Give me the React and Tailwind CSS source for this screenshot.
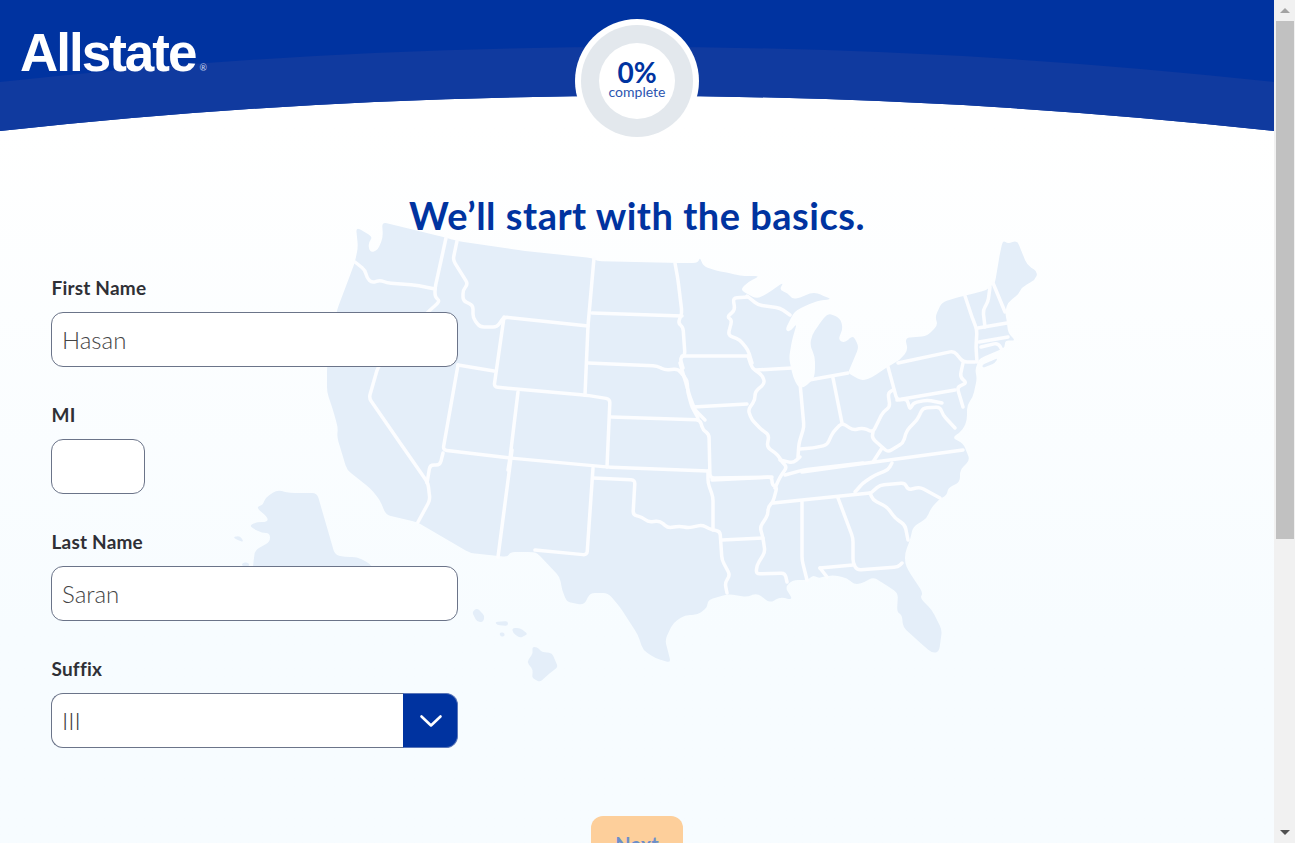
import React from 'react';

// silhouette of the lower 48, clockwise from the Olympic peninsula
const US_OUTLINE = `356,227 373,237 368,243 370,253 378,250 383,237 382,222 447,238 457,241 525,251 592,258 597,261 673,263 698,263 700,257 703,266 717,271 730,273 740,276 760,276 748,282 740,290 757,299 768,293 784,282 779,290 788,293 792,299 800,298 810,293 818,293 823,296 832,299 817,301 805,306 797,310 793,314 790,320 785,330 790,332 797,323 792,340 789,358 793,377 798,387 803,388 813,380 815,373 815,357 810,345 812,335 820,323 828,313 840,318 843,328 838,340 845,343 853,335 859,347 850,368 848,373 862,381 873,377 887,367 900,360 908,350 905,338 927,336 938,325 935,317 942,302 963,296 968,295 987,290 992,285 995,283 1000,253 1003,240 1008,244 1017,240 1027,265 1038,272 1035,280 1022,287 1018,295 1008,302 1005,312 1007,322 1008,333 1016,341 1005,340 1005,347 1000,350 980,358 978,362 975,370 977,378 973,397 967,405 967,420 963,430 952,438 963,443 970,460 960,470 960,482 948,488 947,495 938,500 930,510 927,518 913,527 910,540 905,553 905,563 908,570 923,593 920,598 932,610 942,630 939,652 932,653 917,640 903,627 902,615 897,612 898,593 883,583 873,577 865,582 855,585 847,578 833,575 823,577 818,578 813,575 808,580 793,580 785,587 793,600 780,597 770,603 757,593 747,597 728,594 708,600 707,608 697,615 685,615 673,623 665,640 671,663 655,658 643,650 638,635 620,607 608,593 590,593 584,605 567,602 562,590 560,577 537,553 533,552 510,552 508,557 470,553 422,525 417,522 386,515 380,500 370,488 347,470 337,437 338,428 333,410 327,392 327,367 337,310 352,270 355,262 358,247`;

const ALASKA = `317,493 335,555 345,557 357,557 367,562 372,566 372,570 253,570 253,566 255,550 270,542 270,533 262,533 252,528 250,525 257,522 267,522 268,518 256,507 263,505 265,498 277,490 290,493`;

const ISLANDS = [
  '233,537 240,536 244,542 237,540',
  '242,563 248,562 250,566 242,566',
  '472,612 477,608 485,616 483,622 477,622',
  '495,622 508,621 508,626 497,625',
  '499,633 504,632 505,636 501,637',
  '512,628 520,628 528,634 520,638 513,633',
  '532,647 537,647 542,652 552,653 558,667 550,673 540,682 532,678 533,670 527,662 533,653',
  '982,365 998,358 995,363 983,368',
];

const STATE_LINES = [
  '355,262 365,270 367,278 372,283 380,280 387,283 415,285 435,289',
  '446,238 435,288 435,297 440,301 427,313 378,367 369,398 405,450 428,483 430,500 418,522',
  '457,241 453,260 468,284 463,290 463,301 473,305 473,318 480,327 497,327 504,317 588,326',
  '504,317 494,387 585,395 610,399 607,467',
  '594,258 588,326 585,395',
  '592,313 682,316',
  '588,363 657,366 665,370 678,369 687,380 688,393 692,407 698,418',
  '675,263 678,280 682,313 678,323 683,327 685,355 680,358 683,368',
  '682,356 748,356',
  '518,392 510,458 508,470',
  '458,365 443,450 510,458 607,467 708,471',
  '458,365 494,371',
  '443,453 440,465 430,465 427,483',
  '512,450 498,557',
  '593,468 587,555 535,550',
  '593,478 635,480 633,515 642,517 648,522 660,521 668,528 680,526 688,528 702,525 712,530 720,531 722,560 730,575 725,583 727,593',
  '708,471 708,483 713,497 713,530',
  '712,480 772,477 772,485 777,487 773,502 768,507 768,515 760,527 763,538 765,552 757,565 756,574 785,573 787,582',
  '722,540 763,538',
  '802,502 802,560 807,580',
  '773,503 870,493',
  '838,498 853,538 853,563 857,570 898,567 902,563',
  '820,568 853,565',
  '820,568 827,577',
  '870,493 873,500 887,507 895,518 905,525 908,540',
  '872,492 880,485 905,483 908,490 920,487 940,498',
  '855,492 863,483 875,475 888,470 892,463',
  '802,472 867,463 963,450',
  '693,407 747,404',
  '611,417 700,420 703,430 709,434 710,478 772,477',
  '680,363 685,380 690,397 695,410 705,420',
  '748,356 752,368 762,375 765,383 755,392 755,400 748,410 752,420 762,430 769,435 767,447 778,455 782,462 787,467 780,477 775,488',
  '748,297 733,298 735,310 727,317 732,320 728,335 740,340 748,350 752,363',
  '747,296 758,305 780,308 790,315',
  '756,370 792,368',
  '800,383 804,427 799,443 798,457',
  '809,380 848,373',
  '833,378 842,423',
  '800,449 813,448 827,445 833,432 842,423 853,430 863,428 873,432 883,412 890,407 888,393 893,390',
  '780,460 793,463 800,457',
  '873,432 872,438 883,448 888,452 903,443 907,430 917,420 923,408 940,407 943,415 955,428',
  '882,448 873,462',
  '785,475 803,470 863,463',
  '888,367 897,400 955,390',
  '898,363 954,351 963,362 975,362',
  '963,363 960,377 967,383 957,387 963,407',
  '897,400 907,399 910,410 913,403 927,400 942,403',
  '965,296 972,317 977,330 976,347 977,362',
  '990,287 988,302 983,310 985,327',
  '993,283 1005,312',
  '978,328 1007,323',
  '979,342 1008,337',
  '981,347 998,343 1002,350',
];

// turns "x,y x,y" into a path whose corners are rounded off, so the coast and rivers don't look jagged
function roundedPath(str, closed, r = 5) {
  const pts = str.trim().split(/\s+/).map((p) => p.split(',').map(Number));
  const n = pts.length;
  const toward = (a, b, d) => {
    const len = Math.hypot(b[0] - a[0], b[1] - a[1]) || 1;
    const t = Math.min(d, len / 2) / len;
    return [a[0] + (b[0] - a[0]) * t, a[1] + (b[1] - a[1]) * t];
  };
  let d = '';
  for (let i = 0; i < n; i++) {
    const cur = pts[i];
    if (!closed && (i === 0 || i === n - 1)) {
      d += `${i === 0 ? 'M' : 'L'}${cur[0]} ${cur[1]}`;
      continue;
    }
    const prev = pts[(i - 1 + n) % n];
    const next = pts[(i + 1) % n];
    const a = toward(cur, prev, r);
    const b = toward(cur, next, r);
    d += `${i === 0 ? 'M' : 'L'}${a[0]} ${a[1]}Q${cur[0]} ${cur[1]} ${b[0]} ${b[1]}`;
  }
  return closed ? d + 'Z' : d;
}

function UsMap() {
  return (
    <svg className="absolute left-0 top-0" width="1274" height="843" viewBox="0 0 1274 843" aria-hidden="true">
      <g fill="#e4eef9">
        <path d={roundedPath(US_OUTLINE, true)} />
        <path d={roundedPath(ALASKA, true)} />
        {ISLANDS.map((pts) => (
          <path key={pts} d={roundedPath(pts, true, 3)} />
        ))}
      </g>
      <g fill="none" stroke="#fcfdff" strokeWidth="3.5" strokeLinejoin="round" strokeLinecap="round">
        {STATE_LINES.map((pts) => (
          <path key={pts} d={roundedPath(pts, false, 4)} />
        ))}
      </g>
    </svg>
  );
}

function HeaderWaves() {
  return (
    <svg className="absolute left-0 top-0" width="1274" height="132" viewBox="0 0 1274 132" aria-hidden="true">
      <path d="M0 0H1274V131Q637 61 0 131Z" fill="#0033a0" />
      <path d="M0 82Q637 12 1274 82V131Q637 61 0 131Z" fill="#103a9f" />
    </svg>
  );
}

function Progress() {
  return (
    <div className="absolute left-[575px] top-[19px] flex h-[124px] w-[124px] items-center justify-center rounded-full bg-white">
      <div className="flex h-[112px] w-[112px] items-center justify-center rounded-full bg-[#e3e8ed]">
        <div className="flex h-[76px] w-[76px] flex-col items-center justify-center rounded-full bg-white pb-[5px] text-[#0033a0]">
          <span className="text-[28px] font-bold leading-[26px]">0%</span>
          <span className="text-[14px] leading-[14px] text-[#2c55b0]">complete</span>
        </div>
      </div>
    </div>
  );
}

function Field({ label, value, width = 'w-[407px]' }) {
  return (
    <div className="mb-9">
      <label className="mb-3 block h-6 pl-[0.5px] text-[19px] font-bold leading-6 tracking-[0.2px] text-[#2f3036]">{label}</label>
      <input
        readOnly
        value={value}
        className={`${width} block h-[55px] rounded-xl border border-[#6b7489] bg-white px-[10px] text-[24px] font-light text-[#444444] outline-none`}
      />
    </div>
  );
}

function ScrollBar() {
  return (
    <div className="flex h-[843px] w-[21px] flex-col bg-[#f1f1f1]">
      <div className="flex h-[21px] w-full items-center justify-center">
        <div className="h-0 w-0 border-x-[5px] border-b-[5px] border-x-transparent border-b-[#a3a3a3]" />
      </div>
      <div className="ml-[2px] h-[518px] w-[18px] bg-[#c1c1c1]" />
      <div className="flex-1" />
      <div className="flex h-[21px] w-full items-center justify-center">
        <div className="h-0 w-0 border-x-[5px] border-t-[5px] border-x-transparent border-t-[#505050]" />
      </div>
    </div>
  );
}

export default function App() {
  return (
    <div className="flex h-[843px] overflow-hidden font-[Lato,sans-serif]">
      <main className="relative h-[843px] w-[1274px] overflow-hidden bg-gradient-to-b from-white from-[15%] to-[#f7fcff] to-[75%]">
        <UsMap />
        <header className="relative h-[132px]">
          <HeaderWaves />
          <div className="absolute left-[20px] top-[23px] flex items-start text-white">
            <span className="font-['Liberation_Sans',sans-serif] text-[53px] font-bold leading-[60px] tracking-[-2px]">Allstate</span>
            <span className="ml-[4px] mt-[40px] text-[9px] leading-[10px] text-[#c9d4ee]">®</span>
          </div>
          <Progress />
        </header>

        <h1 className="relative mt-[61px] text-center text-[38px] font-bold leading-[44px] tracking-[0.5px] text-[#0033a0]">
          We’ll start with the basics.
        </h1>

        <form className="relative mt-[39px] pl-[51px]">
          <Field label="First Name" value="Hasan" />
          <Field label="MI" value="" width="w-[94px]" />
          <Field label="Last Name" value="Saran" />
          <div>
            <label className="mb-3 block h-6 pl-[0.5px] text-[19px] font-bold leading-6 tracking-[0.2px] text-[#2f3036]">Suffix</label>
            <div className="flex h-[55px] w-[407px]">
              <span className="flex-1 rounded-l-xl border border-r-0 border-[#6b7489] bg-white px-[10px] text-[24px] font-light leading-[53px] text-[#444444]">III</span>
              <span className="flex w-[55px] items-center justify-center rounded-r-xl border border-[#5a76b8] border-l-[#0033a0] bg-[#0033a0]">
                <svg width="24" height="14" viewBox="0 0 24 14" fill="none" stroke="#fff" strokeWidth="2.6" strokeLinecap="round" strokeLinejoin="round">
                  <path d="M2.5 2.5 12 11.5 21.5 2.5" />
                </svg>
              </span>
            </div>
          </div>

          <div className="ml-[-51px] mt-[68px] flex justify-center">
            <button type="button" className="h-[55px] w-[92px] rounded-xl bg-[#fdcf9b] text-[20px] font-bold text-[#6c8fcb]">
              Next
            </button>
          </div>
        </form>
      </main>
      <ScrollBar />
    </div>
  );
}
